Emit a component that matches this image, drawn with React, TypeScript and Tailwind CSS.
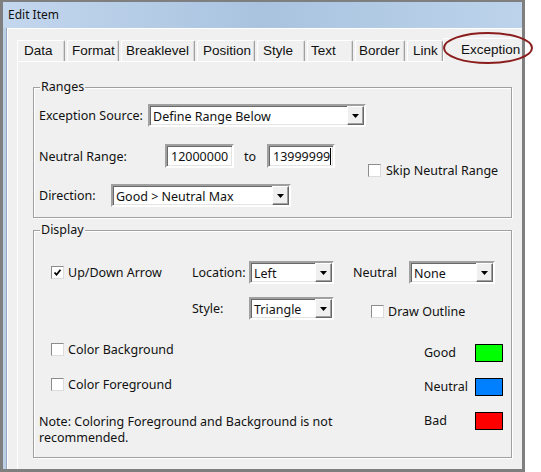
import React from 'react';

const tabs = [
  { label: 'Data', cls: 'w-[48px] pl-[6px]' },
  { label: 'Format', cls: 'w-[52px] pl-[4px]' },
  { label: 'Breaklevel', cls: 'w-[74px] pl-[4px]' },
  { label: 'Position', cls: 'w-[58px] pl-[5px]' },
  { label: 'Style', cls: 'w-[48px] pl-[5px]' },
  { label: 'Text', cls: 'w-[46px] pl-[3px]' },
  { label: 'Border', cls: 'w-[50px] pl-[3px]' },
  { label: 'Link', cls: 'w-[36px] pl-[5px]' },
];

const sunken =
  'border-2 border-t-[#a0a0a0] border-l-[#a0a0a0] border-b-white border-r-white bg-white shadow-[inset_1px_1px_0_#696969,inset_-1px_-1px_0_#e3e3e3]';

function Drop({ w, value }: { w: string; value: string }) {
  return (
    <div className={`${w} h-[23px] flex ${sunken}`}>
      <span className="flex-1 pl-[3px] pt-px leading-[19px] whitespace-nowrap overflow-hidden">
        {value}
      </span>
      <div className="w-[17px] h-[19px] flex items-center justify-center bg-[#f0f0f0] border border-t-white border-l-white border-b-[#696969] border-r-[#696969] shadow-[inset_-1px_-1px_0_#a0a0a0]">
        <svg width="7" height="4" viewBox="0 0 7 4">
          <path d="M0 0h7L3.5 4z" fill="#000" />
        </svg>
      </div>
    </div>
  );
}

function TextBox({ w, value, caret }: { w: string; value: string; caret?: boolean }) {
  return (
    <div className={`${w} h-[24px] flex items-center pl-[4px] ${sunken}`}>
      <span className="leading-[18px] pt-px">{value}</span>
      {caret && <span className="w-px h-[17px] bg-black" />}
    </div>
  );
}

function Check({ checked }: { checked?: boolean }) {
  return (
    <div className="w-[13px] h-[13px] shrink-0 bg-white border border-[#8c8c8c] border-b-[#dcdcdc] border-r-[#dcdcdc] flex items-center justify-center">
      {checked && (
        <svg width="9" height="9" viewBox="0 0 9 9">
          <path d="M1.5 4.5l2 2.2 4-5" stroke="#000" strokeWidth="1.8" fill="none" />
        </svg>
      )}
    </div>
  );
}

function Group({ title, size, children }: { title: string; size: string; children: React.ReactNode }) {
  return (
    <div
      className={`relative ${size} border border-[#a0a0a0] shadow-[inset_1px_1px_0_#fff,1px_1px_0_#fff] pl-[5px]`}
    >
      <span className="absolute left-[6px] -top-[9px] bg-[#f0f0f0] px-px leading-[16px]">
        {title}
      </span>
      {children}
    </div>
  );
}

function Swatch({ color }: { color: string }) {
  return <div className={`w-[28px] h-[18px] border border-black ${color}`} />;
}

export default function App() {
  return (
    <div className="relative w-[541px] h-[472px] bg-white font-['Noto_Sans',sans-serif] text-[12.5px] text-[#111]">
      <div className="flex flex-col w-[525px] h-[472px] border-[3px] border-t-2 border-[#7f7f7f]">
        <div className="h-[26px] shrink-0 flex items-center pl-[5px] text-[12px] bg-gradient-to-r from-[#c3d7ee] via-[#a9c3df] to-[#bcd3eb]">
          Edit Item
        </div>
        <div className="flex flex-1">
          <div className="w-[4px] bg-[#bccfe5] border-r border-[#93a8c0]" />
          <div className="flex-1 flex flex-col bg-[#f0f0f0] border-l border-t border-white pt-[9px] pl-[9px]">
            {/* tab strip */}
            <div className="flex items-end h-[23px] font-['Liberation_Sans',Arial,sans-serif] text-[13.5px]">
              {tabs.map((t) => (
                <div
                  key={t.label}
                  className={`${t.cls} h-[21px] mr-[2px] flex items-center border-l border-t border-white border-r border-r-[#a0a0a0] rounded-t-[2px] shadow-[inset_-1px_0_0_#d8d8d8]`}
                >
                  {t.label}
                </div>
              ))}
              <div className="relative z-10 -mb-px -ml-[2px] flex-1 h-[24px] flex items-center pl-[17px] bg-[#f0f0f0] border-l border-t border-white rounded-t-[2px]">
                Exception
              </div>
            </div>

            {/* tab page */}
            <div className="flex-1 border-l border-t border-white pl-[15px] pt-[25px]">
              <Group title="Ranges" size="w-[479px] h-[131px]">
                <div className="pt-[16px]">
                  <div className="flex items-center h-[23px]">
                    <span className="w-[109px] pt-[2px]">Exception Source:</span>
                    <Drop w="w-[218px]" value="Define Range Below" />
                  </div>
                  <div className="flex items-center h-[24px] mt-[17px]">
                    <span className="w-[126px] pt-[2px]">Neutral Range:</span>
                    <TextBox w="w-[69px]" value="12000000" />
                    <span className="ml-[10px] w-[23px] pt-[2px]">to</span>
                    <TextBox w="w-[68px]" value="13999999" caret />
                    <div className="self-start mt-[20px] ml-[33px] flex items-center h-[13px] gap-[5px]">
                      <Check />
                      <span className="pt-px">Skip Neutral Range</span>
                    </div>
                  </div>
                  <div className="flex items-center h-[23px] mt-[16px]">
                    <span className="w-[72px] pt-[2px]">Direction:</span>
                    <Drop w="w-[180px]" value="Good > Neutral Max" />
                  </div>
                </div>
              </Group>

              <div className="mt-[12px]">
                <Group title="Display" size="w-[479px] h-[228px]">
                  <div className="pt-[30px]">
                    <div className="flex items-center h-[23px]">
                      <div className="w-[153px] flex items-center pl-[12px] gap-[4px]">
                        <Check checked />
                        <span className="pt-px">Up/Down Arrow</span>
                      </div>
                      <span className="w-[57px] pt-[2px]">Location:</span>
                      <Drop w="w-[85px]" value="Left" />
                      <span className="ml-[19px] w-[56px] pt-[2px]">Neutral</span>
                      <Drop w="w-[86px]" value="None" />
                    </div>
                    <div className="flex items-center h-[23px] mt-[13px]">
                      <div className="w-[153px]" />
                      <span className="w-[57px] pt-[2px]">Style:</span>
                      <Drop w="w-[85px]" value="Triangle" />
                      <div className="self-start mt-[8px] ml-[37px] flex items-center h-[13px] gap-[4px]">
                        <Check />
                        <span className="pt-px">Draw Outline</span>
                      </div>
                    </div>

                    <div className="flex">
                      <div className="w-[385px]">
                        <div className="mt-[23px] h-[13px] flex items-center pl-[12px] gap-[4px]">
                          <Check />
                          <span className="pt-px">Color Background</span>
                        </div>
                        <div className="mt-[22px] h-[13px] flex items-center pl-[12px] gap-[4px]">
                          <Check />
                          <span className="pt-px">Color Foreground</span>
                        </div>
                        <p className="mt-[23px] leading-[16px]">
                          Note: Coloring Foreground and Background is not
                          <br />
                          recommended.
                        </p>
                      </div>
                      <div>
                        <div className="mt-[24px] h-[18px] flex items-center">
                          <span className="w-[51px] pt-px">Good</span>
                          <Swatch color="bg-[#00ff00]" />
                        </div>
                        <div className="mt-[16px] h-[18px] flex items-center">
                          <span className="w-[51px] pt-px">Neutral</span>
                          <Swatch color="bg-[#0080ff]" />
                        </div>
                        <div className="mt-[16px] h-[18px] flex items-center">
                          <span className="w-[51px] pt-px">Bad</span>
                          <Swatch color="bg-[#ff0000]" />
                        </div>
                      </div>
                    </div>
                  </div>
                </Group>
              </div>
            </div>
          </div>
        </div>
      </div>

      <svg className="absolute z-20 left-[440px] top-[30px]" width="96" height="36" viewBox="0 0 96 36">
        <ellipse cx="48" cy="18" rx="44" ry="15" fill="none" stroke="#8b1c1c" strokeWidth="2" />
      </svg>
    </div>
  );
}
